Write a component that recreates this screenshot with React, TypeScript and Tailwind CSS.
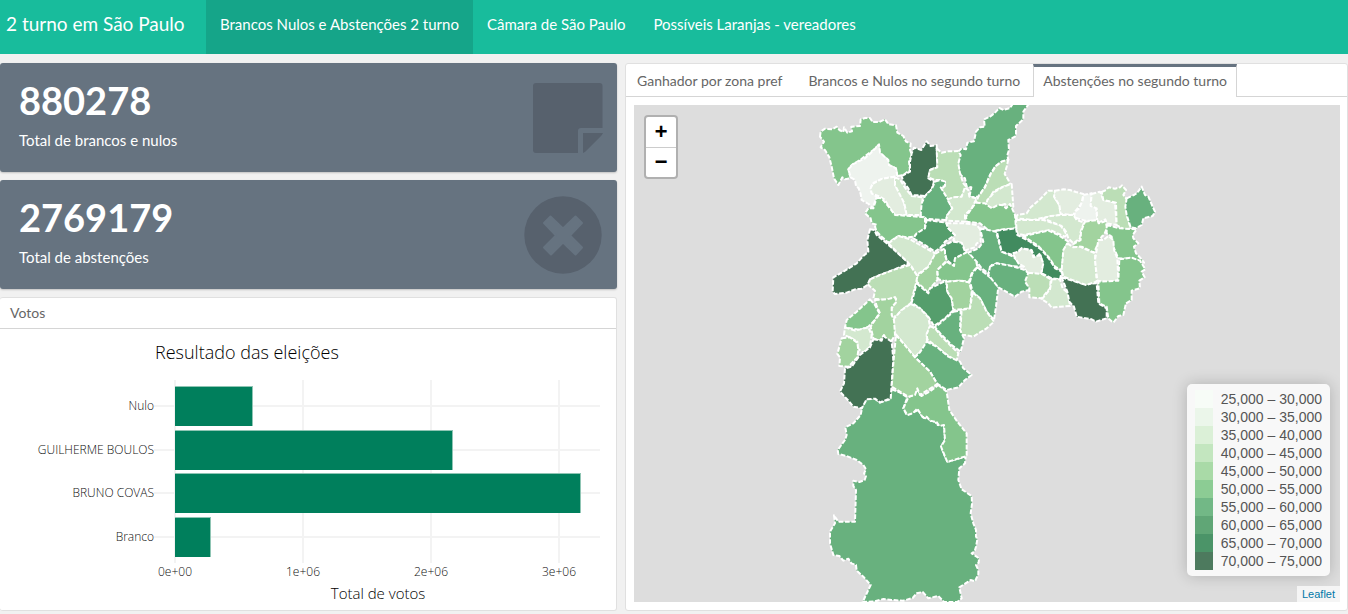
import React from "react";

type Zone = [fill: string, points: string];
type Sector = { x: number; y: number; zones: Zone[] };

const C30 = "#eef3ee";
const C35 = "#e3ede0";
const C40 = "#d3e8cf";
const C45 = "#bbdeb6";
const C50 = "#a2d39f";
const C55 = "#84c58c";
const C60 = "#68b17e";
const C65 = "#559e6c";
const C70 = "#418b5f";
const C75 = "#437254";

// Zone outlines are kept in thirds of a map unit, relative to their sector's origin.
const sectors: Sector[] = [
  {
    x: 186,
    y: 275,
    zones: [
      [C60, "215,28 240,38 262,52 250,85 260,105 278,98 295,90 305,106 312,114 325,116 335,125 346,124 350,135 372,135 375,180 363,200 372,222 382,245 437,230 435,250 418,265 415,300 425,328 455,348 456,372 452,400 460,430 468,450 468,470 472,478 468,500 464,514 455,520 477,535 476,548 468,555 475,570 475,582 465,604 452,600 440,608 418,622 425,655 412,666 372,666 355,648 325,655 308,636 290,640 278,654 250,662 215,660 190,657 165,664 128,666 152,615 130,590 110,572 108,555 94,550 85,536 70,542 58,528 40,525 30,490 30,455 45,430 42,406 55,425 105,425 108,330 100,318 100,302 118,306 134,300 138,288 132,280 138,268 130,255 110,240 80,228 55,222 53,210 75,180 80,165 76,142 100,130 122,105 128,75 140,55 165,56 180,68 210,58"],
      [C55, "355,15 380,35 388,90 412,125 440,160 440,228 382,246 372,222 363,200 375,180 372,135 358,138 350,126 330,122 320,110 308,112 292,86 278,100 262,105 250,85 265,52 285,42 290,26 304,48 330,34"],
    ],
  },
  {
    x: 326,
    y: -5,
    zones: [
      [C60, "-5,155 5,145 18,148 22,128 42,124 48,95 60,82 74,80 72,58 90,50 105,38 118,24 130,30 150,24 158,12 206,12 190,35 190,58 168,78 168,108 145,120 147,150 142,165 145,180 125,185 105,200 90,225 75,260 55,290 28,292 34,262 20,260 15,235 2,225 -5,205"],
      [C45, "145,178 140,200 134,222 145,240 150,252 125,262 100,275 85,300 78,320 48,308 55,290 75,262 92,222 108,198 125,185"],
      [C40, "155,252 160,320 150,325 135,312 115,318 100,325 78,318 82,300 105,275 130,260"],
      [C55, "48,308 75,310 95,325 115,314 128,316 138,325 150,312 165,345 168,385 130,388 90,395 60,370 20,365 18,350 35,325"],
      [C40, "168,355 172,345 200,340 212,322 240,298 265,272 285,272 285,295 298,315 302,345 250,353 220,360"],
      [C35, "285,272 310,268 330,270 348,276 370,282 365,310 345,335 340,345 302,342 298,315 282,290"],
      [C30, "370,285 395,280 392,315 408,322 412,362 375,362 342,352 345,335 358,325 368,300"],
      [C35, "395,282 420,275 430,300 465,308 470,375 440,370 436,358 412,370 410,325 392,318"],
      [C45, "425,276 438,270 446,262 465,266 480,262 486,256 498,270 490,285 502,300 498,320 502,350 512,385 495,390 470,375 468,308 430,300"],
      [C60, "500,295 522,285 532,278 545,260 555,285 565,290 578,320 585,335 578,348 550,355 545,375 528,385 512,382 500,345 496,320"],
      [C40, "168,360 250,360 280,370 300,375 312,390 320,405 315,410 270,390 190,405 170,400"],
      [C40, "250,355 272,348 302,345 340,345 350,360 372,368 362,395 360,415 340,430 325,415 318,395 305,378 280,368"],
      [C50, "375,365 412,360 416,370 436,364 442,382 432,405 425,410 410,440 402,458 365,440 342,442 340,432 362,420 363,395"],
      [C55, "440,375 480,385 530,388 518,405 520,415 535,430 522,440 528,460 545,478 552,488 520,476 475,475 460,440 455,410 440,400"],
    ],
  },
  {
    x: 176,
    y: -5,
    zones: [
      [C55, "30,110 32,95 45,86 66,88 80,80 88,90 100,96 102,82 112,98 126,94 124,80 150,78 152,58 165,54 180,54 188,66 208,66 225,58 235,72 258,76 262,98 280,108 288,125 302,130 300,150 306,165 297,185 300,210 280,225 262,228 258,205 235,195 232,178 208,158 206,135 190,150 150,180 125,195 115,208 122,235 105,238 97,232 85,255 72,235 65,200 58,172 45,150 32,142 42,125"],
      [C30, "115,208 128,193 165,175 190,152 207,133 210,158 235,180 237,195 258,205 262,228 215,237 188,250 182,265 186,280 200,290 195,305 188,325 176,312 155,300 152,282 146,265 138,258 135,240 122,232"],
      [C35, "188,252 215,237 255,230 255,255 268,275 280,300 290,345 255,345 240,325 225,300 210,290 185,280 182,265"],
      [C40, "255,232 270,238 280,255 290,270 305,288 338,292 335,345 290,345 283,310 265,275 255,255"],
      [C75, "275,228 300,215 300,185 305,160 312,143 334,150 350,124 362,138 380,135 382,200 360,210 355,235 372,245 365,268 345,288 325,286 305,286 295,265 280,245"],
      [C45, "380,145 395,158 415,154 445,153 452,165 445,190 450,220 460,250 470,262 455,290 430,293 415,300 405,290 395,270 408,250 395,240 375,240 355,232 360,210 382,202"],
      [C60, "375,245 390,240 405,245 405,258 392,262 400,275 415,300 427,325 412,345 408,360 350,357 332,345 335,310 345,288 365,268"],
      [C40, "412,298 430,292 455,290 465,262 475,270 478,290 500,295 485,325 465,345 465,365 408,362 412,345 427,325"],
      [C55, "200,293 215,295 240,325 255,345 300,348 345,352 345,385 310,410 290,412 265,408 235,428 215,410 200,395 195,380 200,374 185,370 182,355 165,340 175,325 190,325"],
      [C65, "350,360 408,368 415,385 435,405 405,425 395,440 375,455 345,435 310,415 320,400 345,385"],
      [C35, "410,370 465,370 500,375 512,390 512,425 500,430 495,442 475,448 465,452 455,430 430,420 435,405 415,385"],
    ],
  },
  {
    x: 186,
    y: 115,
    zones: [
      [C65, "365,80 395,65 425,68 435,95 440,97 405,115 402,138 380,120 375,100"],
      [C75, "150,28 163,30 170,45 200,70 240,105 267,130 225,148 180,165 150,178 142,195 125,206 105,208 80,218 45,222 38,215 40,172 70,155 110,130 130,108 145,95 142,60"],
      [C40, "205,70 235,48 270,58 300,75 345,100 340,115 325,140 290,165 275,140 262,125 240,105"],
      [C50, "345,102 375,85 375,105 380,122 352,150 352,180 330,205 325,218 290,185 292,168 325,140"],
      [C55, "380,125 402,138 405,115 440,97 465,110 472,140 455,160 447,185 420,182 380,185 355,178 352,150"],
      [C45, "150,178 180,165 225,148 270,135 292,168 288,190 272,250 245,270 230,290 212,285 215,265 230,240 225,232 200,240 160,236 165,212 145,195"],
      [C65, "290,190 325,220 330,205 378,182 382,215 395,235 400,270 375,295 342,318 325,290 300,265 275,248"],
      [C50, "380,185 420,182 447,187 455,215 450,265 400,270 395,235 382,215"],
      [C60, "472,142 495,160 520,180 535,200 528,260 522,300 500,275 480,235 458,215 450,185 457,160"],
      [C45, "458,218 480,235 500,275 522,305 500,325 475,340 460,350 435,345 420,345 425,270 450,265"],
      [C60, "400,275 422,272 420,330 432,355 422,395 395,375 365,345 345,322 375,297"],
      [C40, "272,252 300,265 325,292 330,320 320,345 322,380 300,395 285,412 250,370 225,340 218,300 245,270"],
      [C45, "330,318 345,325 365,350 415,400 410,422 385,408 350,380 322,358 320,342"],
      [C60, "320,365 350,380 385,410 420,425 430,445 455,465 435,480 415,502 380,510 350,490 330,455 285,412 300,397"],
      [C55, "150,238 165,255 178,280 165,300 145,320 120,330 75,322 80,300 110,275"],
      [C50, "165,240 200,238 225,232 230,245 215,262 215,285 222,300 225,345 215,362 200,360 192,345 180,362 160,355 152,320 165,300 180,280 170,258"],
      [C40, "75,322 105,332 145,322 155,345 150,380 130,398 112,385 112,365 90,352 72,345"],
      [C50, "65,355 90,352 112,368 115,390 112,412 85,440 58,438 60,412 52,402"],
      [C75, "160,358 185,362 190,348 215,365 220,420 212,535 180,547 165,536 140,538 125,565 100,560 88,545 60,515 72,490 75,445 95,440 120,405 150,382"],
      [C50, "228,345 250,370 285,412 330,455 352,492 300,525 292,505 285,525 265,530 215,500 220,430"],
    ],
  },
  {
    x: 346,
    y: 105,
    zones: [
      [C60, "0,55 48,65 65,125 100,140 130,170 90,168 50,160 35,165 25,190 5,175 -10,155 -35,128 -5,115 10,95"],
      [C55, "130,78 205,62 235,75 265,95 252,120 245,180 225,170 205,140 175,108"],
      [C70, "50,62 108,55 112,75 150,95 185,120 210,150 225,175 245,185 240,208 215,205 185,190 188,160 180,130 165,145 155,120 125,115 100,135 65,125"],
      [C35, "98,130 115,126 125,115 155,122 160,142 180,135 190,160 182,195 140,188 132,170 115,160"],
      [C60, "30,170 50,160 95,168 135,180 145,190 148,240 125,245 105,260 55,232 25,195"],
      [C45, "145,188 185,192 212,208 210,235 185,265 148,262 148,235 135,215"],
      [C40, "215,208 240,208 248,235 265,250 270,288 240,290 215,293 205,280 185,268 210,238"],
      [C75, "245,202 310,222 350,220 355,280 380,295 380,325 348,335 335,328 290,320 282,290 268,275 262,245"],
      [C40, "262,100 280,112 300,110 345,130 350,215 318,225 250,200 245,180 250,120"],
      [C35, "355,90 370,90 385,78 400,90 402,120 412,145 415,210 385,217 352,212 345,150"],
      [C55, "418,148 455,143 480,152 496,178 485,185 494,202 478,212 480,235 455,242 455,270 438,280 430,315 415,318 400,338 385,325 380,290 358,280 355,215 415,212"],
    ],
  },
];

const legend: [string, string][] = [
  ["bg-[#f7fcf7]", "25,000 – 30,000"],
  ["bg-[#ebf6ea]", "30,000 – 35,000"],
  ["bg-[#dbf0d7]", "35,000 – 40,000"],
  ["bg-[#c3e6bf]", "40,000 – 45,000"],
  ["bg-[#a9daa7]", "45,000 – 50,000"],
  ["bg-[#8ccc94]", "50,000 – 55,000"],
  ["bg-[#72b886]", "55,000 – 60,000"],
  ["bg-[#60a676]", "60,000 – 65,000"],
  ["bg-[#4b9468]", "65,000 – 70,000"],
  ["bg-[#4d7a5e]", "70,000 – 75,000"],
];

const bars = [
  { name: "Nulo", y: 406, w: 77 },
  { name: "GUILHERME BOULOS", y: 450, w: 277 },
  { name: "BRUNO COVAS", y: 493, w: 405 },
  { name: "Branco", y: 537, w: 35 },
];

const ticks = [
  { label: "0e+00", x: 175 },
  { label: "1e+06", x: 303 },
  { label: "2e+06", x: 431 },
  { label: "3e+06", x: 559 },
];

function Navbar() {
  return (
    <header className="flex h-[54px] items-stretch bg-[#18bc9c] text-white">
      <a href="#" className="flex w-[206px] items-center pb-[6px] pl-[6px] text-[19px] leading-6">
        2 turno em São Paulo
      </a>
      <nav className="flex text-[15px] leading-5">
        <a href="#brancos" className="flex items-center bg-[#15a589] px-[14px] pb-[6px]">
          Brancos Nulos e Abstenções 2 turno
        </a>
        <a href="#camara" className="flex items-center px-[14px] pb-[6px]">
          Câmara de São Paulo
        </a>
        <a href="#laranjas" className="flex items-center px-[14px] pb-[6px]">
          Possíveis Laranjas - vereadores
        </a>
      </nav>
    </header>
  );
}

function ValueBox({ value, caption, icon }: { value: string; caption: string; icon: React.ReactNode }) {
  return (
    <section className="flex h-[109px] items-start justify-between rounded-[3px] bg-[#667380] pr-[14px] pl-[19px] text-white shadow-[0_1px_2px_rgba(0,0,0,0.2)]">
      <div className="pt-[15px]">
        <p className="text-[38px] leading-[44px] font-bold">{value}</p>
        <p className="pt-2 text-[15px] leading-5">{caption}</p>
      </div>
      {icon}
    </section>
  );
}

function NoteIcon() {
  return (
    <svg className="mt-[16px] h-[78px] w-[80px]" viewBox="0 0 80 78" fill="#57616d" aria-hidden="true">
      <path d="M13 4H76.500a3 3 0 0 1 3 3V49H58a3 3 0 0 0-3 3V74H13a3 3 0 0 1-3-3V7a3 3 0 0 1 3-3Z" />
      <path d="M60 54H80q-1 2-2.500 3.500L64 71q-1.500 2-4 3Z" />
    </svg>
  );
}

function TimesIcon() {
  return (
    <svg className="mt-[16px] h-[78px] w-[80px]" viewBox="0 0 80 78" aria-hidden="true">
      <circle cx="40" cy="39" r="38.700" fill="#57616d" />
      <path
        d="M21 27 27.500 20.500 40 32.500 52.500 20.500 59 27 47 39.500 59 51.500 52.500 58.500 40 46.500 28 58.500 21 51.500 33 39.500Z"
        fill="#667380"
        stroke="#667380"
        strokeWidth="2"
        strokeLinejoin="round"
      />
    </svg>
  );
}

function VotesChart() {
  return (
    <svg
      viewBox="0 329 616 280"
      className="block w-full font-['Open_Sans',sans-serif] font-light"
      role="img"
      aria-label="Resultado das eleições"
    >
      <text x="155" y="359" fontSize="18" fill="#000">
        Resultado das eleições
      </text>
      {ticks.map((t) => (
        <g key={t.label}>
          <line x1={t.x} x2={t.x} y1="380" y2="563" stroke="#f3f3f3" strokeWidth="2" />
          <text x={t.x} y="576" fontSize="12" fill="#111" textAnchor="middle">
            {t.label}
          </text>
        </g>
      ))}
      {bars.map((b) => (
        <g key={b.name}>
          <line x1="154" x2="600" y1={b.y} y2={b.y} stroke="#f3f3f3" strokeWidth="2" />
          <rect x="175" y={b.y - 20} width={b.w + 1} height="40" fill="#8fc5b4" />
          <rect x="175" y={b.y - 19} width={b.w} height="39" fill="#007f5c" />
          <text x="154" y={b.y + 4} fontSize="12" fill="#111" textAnchor="end">
            {b.name}
          </text>
        </g>
      ))}
      <text x="378" y="599" fontSize="15" fill="#000" textAnchor="middle">
        Total de votos
      </text>
    </svg>
  );
}

function ZoneMap() {
  return (
    <div className="relative min-h-0 flex-1 overflow-hidden bg-[#ddd]">
      <svg viewBox="0 0 706 497" preserveAspectRatio="xMidYMid slice" className="absolute inset-0 h-full w-full">
        {sectors.map((s) => (
          <g key={`${s.x},${s.y}`} transform={`translate(${s.x} ${s.y}) scale(0.33333)`}>
            {s.zones.map(([fill, points]) => (
              <polygon
                key={points}
                points={points}
                fill={fill}
                stroke="#fff"
                strokeWidth="6"
                strokeDasharray="14 5"
                strokeLinejoin="round"
              />
            ))}
          </g>
        ))}
      </svg>
      <div className="absolute top-[10px] left-[10px] flex flex-col overflow-hidden rounded-[4px] border-2 border-black/20 bg-white bg-clip-padding font-['Liberation_Mono',monospace] text-[22px] leading-[30px] font-bold text-black">
        <button type="button" aria-label="Aproximar" className="h-[31px] w-[30px] border-b border-[#ccc] pt-[3px] leading-[27px]">
          +
        </button>
        <button type="button" aria-label="Afastar" className="h-[29px] w-[30px] pt-[3px] leading-[26px]">
          −
        </button>
      </div>
      <ul className="absolute right-[10px] bottom-[26px] rounded-[5px] bg-[#f8f8f8] px-2 py-[6px] font-['Liberation_Sans',Arial,sans-serif] text-[14px] leading-[18px] text-[#555] shadow-[0_0_15px_rgba(0,0,0,0.2)]">
        {legend.map(([swatch, label]) => (
          <li key={label} className="flex gap-2">
            <span className={`h-[18px] w-[18px] ${swatch}`} />
            {label}
          </li>
        ))}
      </ul>
      <a
        href="https://leafletjs.com"
        className="absolute right-0 bottom-0 bg-white/70 px-[5px] font-['Liberation_Sans',Arial,sans-serif] text-[11px] leading-4 text-[#0078a8]"
      >
        Leaflet
      </a>
    </div>
  );
}

function MapCard() {
  return (
    <section className="flex flex-col rounded-[3px] border border-[#e0e0e0] bg-white">
      <div role="tablist" className="flex h-8 items-stretch border-b border-[#d5d5d5] text-[14px] leading-5 text-[#666] box-content">
        <button type="button" role="tab" aria-selected="false" className="px-[11px] pt-[2px]">
          Ganhador por zona pref
        </button>
        <button type="button" role="tab" aria-selected="false" className="pt-[2px] pr-[13px] pl-[15px]">
          Brancos e Nulos no segundo turno
        </button>
        <button
          type="button"
          role="tab"
          aria-selected="true"
          className="-mb-px border-x border-t-[3px] border-x-[#d5d5d5] border-t-[#667380] bg-white px-[9px] pb-[2px]"
        >
          Abstenções no segundo turno
        </button>
      </div>
      <div className="flex flex-1 flex-col p-2 pr-[7px]">
        <ZoneMap />
      </div>
    </section>
  );
}

export default function App() {
  return (
    <div className="flex min-h-screen flex-col bg-[#f1f1f1] font-['Lato',sans-serif]">
      <Navbar />
      <main className="grid flex-1 grid-cols-[617fr_723fr] gap-2 pt-[9px] pb-[3px]">
        <div className="flex flex-col gap-2">
          <ValueBox value="880278" caption="Total de brancos e nulos" icon={<NoteIcon />} />
          <ValueBox value="2769179" caption="Total de abstenções" icon={<TimesIcon />} />
          <section className="flex-1 rounded-[3px] border-y border-r border-[#e0e0e0] bg-white">
            <h2 className="border-b border-[#d5d5d5] px-[10px] py-[6px] text-[14px] leading-[18px] text-[#666]">Votos</h2>
            <VotesChart />
          </section>
        </div>
        <MapCard />
      </main>
    </div>
  );
}
